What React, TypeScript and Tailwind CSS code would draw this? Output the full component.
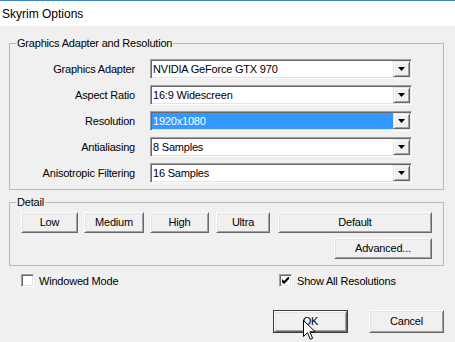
import type { ReactNode } from 'react';

const raised =
  'border border-t-white border-l-white border-r-[#696969] border-b-[#696969] bg-[#f0f0f0] shadow-[inset_1px_1px_0_#e3e3e3,inset_-1px_-1px_0_#a0a0a0]';

function Combo({ value, selected }: { value: string; selected?: boolean }) {
  return (
    <div className="flex h-[20px] w-[262px] border border-t-[#a0a0a0] border-l-[#a0a0a0] border-r-white border-b-white bg-white p-[1px] shadow-[inset_1px_1px_0_#696969,inset_-1px_-1px_0_#e3e3e3]">
      <div className={`flex flex-1 items-center pl-[1px] ${selected ? 'bg-[#3399ff] text-white' : ''}`}>{value}</div>
      <div className="flex w-[17px] items-center justify-center border border-t-[#e3e3e3] border-l-[#e3e3e3] border-r-[#696969] border-b-[#696969] bg-[#f0f0f0] shadow-[inset_1px_1px_0_#fff,inset_-1px_-1px_0_#a0a0a0]">
        <svg width="7" height="4" viewBox="0 0 7 4">
          <path d="M0 0h7L3.5 4z" fill="#000" />
        </svg>
      </div>
    </div>
  );
}

function Btn({ children, className = '' }: { children: ReactNode; className?: string }) {
  return <div className={`flex h-[21px] items-center justify-center ${raised} ${className}`}>{children}</div>;
}

function Check({ label, checked }: { label: string; checked?: boolean }) {
  return (
    <div className="flex items-center gap-[5px]">
      <div className="flex h-[13px] w-[13px] items-center justify-center border border-t-[#a0a0a0] border-l-[#a0a0a0] border-r-white border-b-white bg-white shadow-[inset_1px_1px_0_#696969,inset_-1px_-1px_0_#e3e3e3]">
        {checked && (
          <svg width="7" height="7" viewBox="0 0 7 7">
            <path d="M0 2v3l2 2 5-5V-1L2 4z" fill="#000" />
          </svg>
        )}
      </div>
      <span className="leading-[14px]">{label}</span>
    </div>
  );
}

const rows: [string, string, boolean?][] = [
  ['Graphics Adapter', 'NVIDIA GeForce GTX 970'],
  ['Aspect Ratio', '16:9 Widescreen'],
  ['Resolution', '1920x1080', true],
  ['Antialiasing', '8 Samples'],
  ['Anisotropic Filtering', '16 Samples'],
];

export default function App() {
  return (
    <div className="relative flex h-[342px] w-[455px] flex-col border-t border-t-[#3c86c8] bg-[#f0f0f0] font-['Liberation_Sans',Arial,sans-serif] text-[11px] tracking-[-0.2px] text-black">
      <div className="flex h-[25px] items-center bg-white pl-[2px] text-[12px] tracking-normal">Skyrim Options</div>

      <div className="flex flex-col pl-[9px] pr-[11px]">
        <fieldset className="mt-[10px] border border-[#b9b9b9]">
          <legend className="ml-[6px] px-[1px] leading-[14px]">Graphics Adapter and Resolution</legend>
          <div className="grid grid-cols-[125px_262px] gap-x-[15px] gap-y-[6px] pt-[9px] pb-[6px]">
            {rows.map(([label, value, sel]) => (
              <div key={label} className="contents">
                <div className="flex items-center justify-end">{label}</div>
                <Combo value={value} selected={sel} />
              </div>
            ))}
          </div>
        </fieldset>

        <fieldset className="mt-[5px] border border-[#b9b9b9]">
          <legend className="ml-[6px] px-[1px] leading-[14px]">Detail</legend>
          <div className="flex flex-col px-[11px] pt-[3px] pb-[6px]">
            <div className="flex">
              <Btn className="w-[57px]">Low</Btn>
              <Btn className="ml-[6px] w-[60px]">Medium</Btn>
              <Btn className="ml-[6px] w-[59px]">High</Btn>
              <Btn className="ml-[7px] w-[54px]">Ultra</Btn>
              <Btn className="ml-[8px] w-[154px]">Default</Btn>
            </div>
            <div className="mt-[5px] flex justify-end">
              <Btn className="w-[98px]">Advanced...</Btn>
            </div>
          </div>
        </fieldset>

        <div className="mt-[8px] flex h-[13px] items-center pl-[12px]">
          <div className="w-[258px]">
            <Check label="Windowed Mode" />
          </div>
          <Check label="Show All Resolutions" checked />
        </div>

        <div className="mt-[23px] flex justify-end gap-[21px]">
          <div className="h-[23px] w-[75px] border border-[#3c3c3c]">
            <Btn className="h-full w-full">OK</Btn>
          </div>
          <Btn className="h-[23px] w-[75px]">Cancel</Btn>
        </div>
      </div>

      <svg className="absolute left-[303px] top-[319px]" width="13" height="21" viewBox="0 0 13 21">
        <path d="M0.5 0.5V16.5L4.5 12.7L7.2 19.3L9.6 18.3L6.9 11.8H12.2Z" fill="#fff" stroke="#000" strokeWidth="1" strokeLinejoin="miter" />
      </svg>
    </div>
  );
}
